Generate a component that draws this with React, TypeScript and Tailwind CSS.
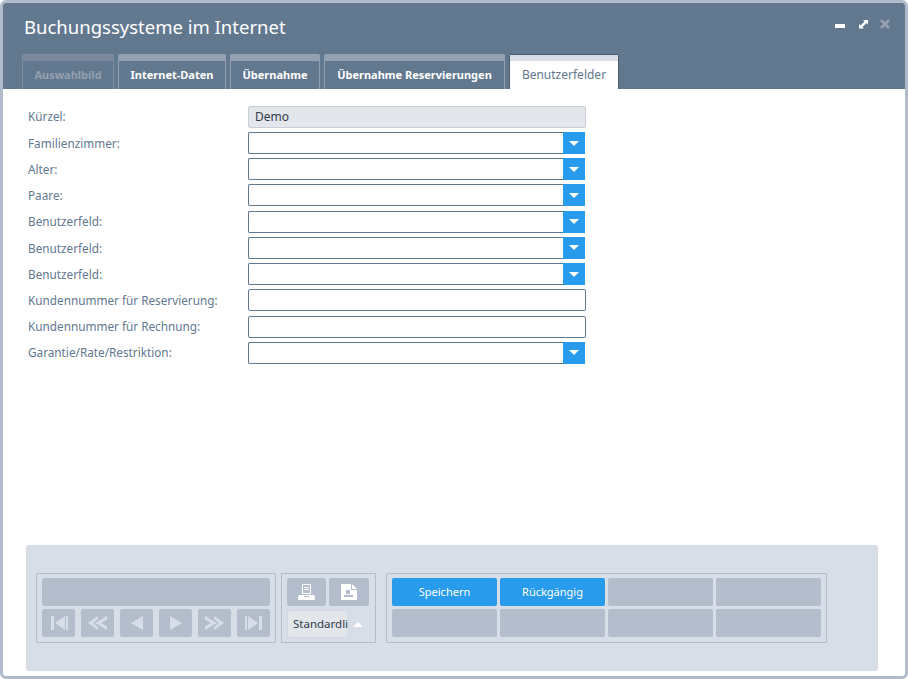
const font = "font-['Noto_Sans',sans-serif]"

const tabs = [
  { label: "Auswahlbild", width: "w-[92px]", disabled: true },
  { label: "Internet-Daten", width: "w-[108px]" },
  { label: "Übernahme", width: "w-[90px]" },
  { label: "Übernahme Reservierungen", width: "w-[181px]" },
  { label: "Benutzerfelder", width: "w-[110px]", active: true },
]

const rows = [
  { label: "Kürzel:", type: "readonly" },
  { label: "Familienzimmer:", type: "select" },
  { label: "Alter:", type: "select" },
  { label: "Paare:", type: "select" },
  { label: "Benutzerfeld:", type: "select" },
  { label: "Benutzerfeld:", type: "select" },
  { label: "Benutzerfeld:", type: "select" },
  { label: "Kundennummer für Reservierung:", type: "input" },
  { label: "Kundennummer für Rechnung:", type: "input" },
  { label: "Garantie/Rate/Restriktion:", type: "select" },
]

function Field({ type }: { type: string }) {
  if (type === "readonly") {
    return (
      <div className="flex h-[22px] w-[338px] items-center rounded-[2px] border border-[#c9ced6] bg-[#e3e6ea] pl-[6px] text-[12px] text-[#2f3b4a]">
        Demo
      </div>
    )
  }
  if (type === "input") {
    return <div className="h-[22px] w-[338px] rounded-[2px] border border-[#62788f] bg-white" />
  }
  return (
    <div className="flex h-[22px] w-[337px]">
      <div className="flex-1 rounded-l-[2px] border border-r-0 border-[#62788f] bg-white" />
      <div className="flex w-[22px] items-center justify-center bg-[#289bed]">
        <svg width="10" height="5" viewBox="0 0 10 5">
          <path d="M0 0h10L5 5z" fill="#fff" />
        </svg>
      </div>
    </div>
  )
}

const navIcons = [
  "M2 0h3v14H2zM6 7l10-7v14zM17 0h2v14h-2z",
  "M0 7 10 0v3L5 7l5 4v3zM7 7 19 0v3.500L13 7l6 3.500V14z",
  "M4 7l12-7v14z",
  "M4 0l12 7-12 7z",
  "M19 7 9 0v3l5 4-5 4v3zM12 7 0 0v3.500L6 7l-6 3.500V14z",
  "M1 0h2v14H1zM4 0l10 7-10 7zM15 0h3v14h-3z",
]

function NavButton({ d }: { d: string }) {
  return (
    <div className="flex h-[28px] w-[33px] items-center justify-center rounded-[2px] bg-[#b3bdcc]">
      <svg width="19" height="14" viewBox="0 0 19 14" fill="#d8dee8">
        <path d={d} />
      </svg>
    </div>
  )
}

export default function App() {
  return (
    <div className={`flex h-[679px] w-[908px] flex-col overflow-hidden rounded-[6px] border-[3px] border-[#b0bbcc] bg-white ${font}`}>
      {/* Header */}
      <div className="flex h-[86px] shrink-0 flex-col justify-between bg-[#62788f]">
        <div className="flex items-start justify-between pl-[21px] pr-[15px] pt-[11px]">
          <h1 className="text-[18.5px] leading-[26px] text-white">Buchungssysteme im Internet</h1>
          <div className="flex items-center pt-[5px]">
            <svg width="10" height="10" viewBox="0 0 10 10">
              <path d="M0 5h10v4H0z" fill="#fff" />
            </svg>
            <svg className="ml-[14px]" width="9" height="10" viewBox="0 0 9 10" fill="#fff">
              <path d="M0 9.500V5l1.500 1.500 4-4L4 1h5v4.500L7.500 4l-4 4L5 9.500z" />
            </svg>
            <svg className="ml-[12px]" width="10" height="10" viewBox="0 0 10 10" fill="#96a2b1">
              <path d="M2 0l3 3 3-3 2 2-3 3 3 3-2 2-3-3-3 3-2-2 3-3-3-3z" />
            </svg>
          </div>
        </div>
        <div className="flex gap-[4px] pl-[19px]">
          {tabs.map((t) => (
            <div
              key={t.label}
              className={`h-[35px] ${t.width} rounded-t-[2px] border border-b-0 text-center ${
                t.active
                  ? "border-[#4b5c6e] bg-white text-[12px] font-normal text-[#62788f]"
                  : t.disabled
                    ? "border-[#7d8da0] text-[11px] font-bold text-[#95a1af]"
                    : "border-[#94a1b3] text-[11px] font-bold text-white"
              }`}
            >
              <div className={`h-[6px] ${t.active ? "bg-[#d8dee8]" : t.disabled ? "bg-[#7a889b]" : "bg-[#94a1b3]"}`} />
              <div className="pt-[5px] leading-[18px]">{t.label}</div>
            </div>
          ))}
        </div>
      </div>

      {/* Form */}
      <div className="flex flex-1 flex-col gap-[4.22px] pl-[25px] pt-[16.8px]">
        {rows.map((r, i) => (
          <div key={i} className="flex h-[22px] items-center">
            <label className="w-[220px] pt-[1px] text-[11.75px] text-[#62788f]">{r.label}</label>
            <Field type={r.type} />
          </div>
        ))}
      </div>

      {/* Button area */}
      <div className="mb-[5px] ml-[23px] flex h-[126px] w-[852px] shrink-0 items-center gap-[5px] rounded-[2px] bg-[#d8dee8] pl-[10px]">
        <div className="flex h-[70px] w-[240px] flex-col gap-[3px] border border-[#b3bdcc] px-[5px] pt-[4px]">
          <div className="h-[28px] rounded-[2px] bg-[#b3bdcc]" />
          <div className="flex justify-between">
            {navIcons.map((d) => (
              <NavButton key={d} d={d} />
            ))}
          </div>
        </div>

        <div className="flex h-[70px] w-[95px] flex-col gap-[4px] border border-[#b3bdcc] px-[5px] pt-[4px]">
          <div className="flex gap-[3px]">
            <div className="flex h-[28px] w-[39px] items-center justify-center rounded-[2px] bg-[#b3bdcc]">
              <svg width="17" height="16" viewBox="0 0 17 16">
                <path d="M4 0h9v10H4z" fill="#fff" />
                <path d="M5 1h7v8H5z" fill="#b3bdcc" />
                <path d="M6 3h5v1H6zM6 5h5v1H6z" fill="#fff" />
                <path d="M1 11h15l1 2v2a1 1 0 0 1-1 1H1a1 1 0 0 1-1-1v-2z" fill="#fff" />
                <path d="M6 12h5v1H6z" fill="#b3bdcc" />
              </svg>
            </div>
            <div className="flex h-[28px] w-[40px] items-center justify-center rounded-[2px] bg-[#b3bdcc]">
              <svg width="16" height="16" viewBox="0 0 16 16" fill="#fff">
                <path d="M0 0h10v6h6v10H0z" />
                <path d="M11 0l5 5h-5z" />
                <path d="M5 6h4v4H5zM3 11h9v2H3z" fill="#b3bdcc" />
              </svg>
            </div>
          </div>
          <div className="flex items-center">
            <div className="flex h-[28px] w-[60px] items-center whitespace-nowrap rounded-l-[2px] border border-r-0 border-[#d0d5dc] bg-[#e3e6ea] pl-[5px] text-[11.5px] text-[#2f3b4a]">
              Standardli
            </div>
            <svg className="ml-[6px]" width="10" height="5" viewBox="0 0 10 5">
              <path d="M0 5h10L5 0z" fill="#fff" />
            </svg>
          </div>
        </div>

        <div className="ml-[5px] grid h-[70px] w-[441px] grid-cols-4 grid-rows-[28px_28px] gap-[3px] rounded-[2px] border border-[#b3bdcc] px-[5px] pt-[4px]">
          <div className="flex items-center justify-center rounded-[2px] bg-[#289bed] text-[11px] text-white">Speichern</div>
          <div className="flex items-center justify-center rounded-[2px] bg-[#289bed] text-[11px] text-white">Rückgängig</div>
          {[0, 1, 2, 3, 4, 5].map((n) => (
            <div key={n} className="rounded-[2px] bg-[#b3bdcc]" />
          ))}
        </div>
      </div>
    </div>
  )
}
